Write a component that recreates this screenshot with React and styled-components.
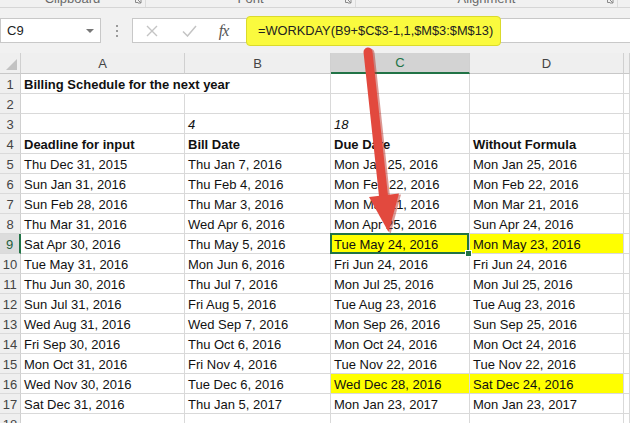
import React from 'react'
import styled, { createGlobalStyle } from 'styled-components';

const GlobalStyle = createGlobalStyle`
    html, body {
        margin: 0;
        padding: 0;
        background: #ffffff;
    }
    body {
        font-family: "Liberation Sans", Arial, sans-serif;
    }
`;

const GREEN = '#217346';
const GRID = '#d9d9d9';

const StyledPage = styled.div`
    position: relative;
    width: 630px;
    height: 423px;
    overflow: hidden;
    background: #f1f1f1;
`;

const StyledRibbon = styled.div`
    display: flex;
    height: 8px;
    border-bottom: 1px solid #d6d6d6;
    box-sizing: border-box;
    overflow: hidden;
`;

const StyledGroup = styled.div`
    position: relative;
    width: ${p => p.$width}px;
    display: flex;
    justify-content: center;
    align-items: flex-end;
    border-right: 1px solid #dcdcdc;
    box-sizing: border-box;
`;

const StyledGroupLabel = styled.span`
    font-size: 13px;
    line-height: 17px;
    color: #6a6a6a;
`;

const StyledLauncher = styled.svg`
    position: absolute;
    right: 3px;
    top: 0;
`;

const StyledFormulaRow = styled.div`
    display: flex;
    align-items: center;
    height: 45px;
`;

const StyledNameBox = styled.div`
    display: flex;
    align-items: center;
    justify-content: space-between;
    width: 101px;
    height: 25px;
    box-sizing: border-box;
    padding: 0 6px 0 6px;
    background: #ffffff;
    border: 1px solid #c8c8c8;
    font-size: 13px;
    color: #222;
`;

const StyledCaret = styled.span`
    width: 0;
    height: 0;
    border-left: 4px solid transparent;
    border-right: 4px solid transparent;
    border-top: 4px solid #777;
`;

const StyledDots = styled.div`
    width: 31px;
    display: flex;
    flex-direction: column;
    align-items: center;
    gap: 3px;

    span {
        width: 2px;
        height: 2px;
        background: #9a9a9a;
    }
`;

const StyledFormulaBox = styled.div`
    flex: 1;
    display: flex;
    align-items: center;
    height: 25px;
    box-sizing: border-box;
    background: #ffffff;
    border: 1px solid #c8c8c8;
    border-right: none;
`;

const StyledIconButton = styled.div`
    width: ${p => p.$width}px;
    display: flex;
    justify-content: center;
    align-items: center;
`;

const StyledFx = styled.span`
    font-family: "Liberation Serif", "Times New Roman", serif;
    font-style: italic;
    font-size: 16px;
    color: #555;
    letter-spacing: -1px;
`;

const StyledHighlight = styled.div`
    margin-left: 7px;
    height: 30px;
    width: 255px;
    box-sizing: border-box;
    display: flex;
    align-items: center;
    padding-left: 11px;
    background: #fafa3e;
    border: 1px solid #dada2c;
    border-radius: 4px;
    font-size: 12.8px;
    color: #222;
    white-space: nowrap;
`;

const StyledSheet = styled.div`
    display: grid;
    grid-template-columns: 21px 164px 146px 139px 154px 1fr;
    grid-auto-rows: 20px;
    grid-template-rows: 21px;
    background: #ffffff;
`;

const StyledCorner = styled.div`
    position: relative;
    background: #efefef;
    border-right: 1px solid #d0d0d0;
    border-bottom: 1px solid #c8c8c8;
    box-sizing: border-box;

    &::after {
        content: '';
        position: absolute;
        right: 3px;
        bottom: 3px;
        width: 0;
        height: 0;
        border-left: 11px solid transparent;
        border-bottom: 11px solid #c2c2c2;
    }
`;

const StyledColHead = styled.div`
    display: flex;
    align-items: center;
    justify-content: center;
    box-sizing: border-box;
    font-size: 13px;
    background: ${p => p.$active ? '#d3d3d3' : '#efefef'};
    color: ${p => p.$active ? GREEN : '#444'};
    border-right: 1px solid #d0d0d0;
    border-bottom: ${p => p.$active ? `2px solid ${GREEN}` : '1px solid #c8c8c8'};
`;

const StyledRowHead = styled.div`
    display: flex;
    align-items: center;
    justify-content: center;
    box-sizing: border-box;
    font-size: 13px;
    padding-top: 1px;
    background: ${p => p.$active ? '#dcdcdc' : '#efefef'};
    color: ${p => p.$active ? '#1e5c3a' : '#444'};
    border-right: ${p => p.$active ? `2px solid ${GREEN}` : '1px solid #d0d0d0'};
    border-bottom: 1px solid #dadada;
`;

const StyledCell = styled.div`
    position: relative;
    box-sizing: border-box;
    padding: 1px 0 0 3px;
    line-height: 19px;
    font-size: 13px;
    color: #111;
    white-space: nowrap;
    overflow: ${p => p.$spill ? 'visible' : 'hidden'};
    z-index: ${p => p.$spill || p.$selected ? 1 : 0};
    font-weight: ${p => p.$bold ? 700 : 400};
    font-style: ${p => p.$italic ? 'italic' : 'normal'};
    background: ${p => p.$fill ? '#ffff00' : '#ffffff'};
    border-right: 1px solid ${p => p.$spill ? '#ffffff' : GRID};
    border-bottom: 1px solid ${GRID};

    ${p => p.$selected && `
        overflow: visible;
        &::before {
            content: '';
            position: absolute;
            left: -1px;
            top: -1px;
            right: 0;
            bottom: -1px;
            border: 2px solid ${GREEN};
            pointer-events: none;
        }
        &::after {
            content: '';
            position: absolute;
            right: -3px;
            bottom: -4px;
            width: 5px;
            height: 5px;
            background: ${GREEN};
            border: 1px solid #ffffff;
        }
    `}
`;

const StyledArrow = styled.svg`
    position: absolute;
    left: 0;
    top: 0;
    z-index: 5;
    pointer-events: none;
`;

const rows = [
    [{ text: 'Billing Schedule for the next year', bold: true, spill: true }, {}, {}, {}],
    [{}, {}, {}, {}],
    [{}, { text: '4', italic: true }, { text: '18', italic: true }, {}],
    [
        { text: 'Deadline for input', bold: true },
        { text: 'Bill Date', bold: true },
        { text: 'Due Date', bold: true },
        { text: 'Without Formula', bold: true },
    ],
    ['Thu Dec 31, 2015', 'Thu Jan 7, 2016', 'Mon Jan 25, 2016', 'Mon Jan 25, 2016'],
    ['Sun Jan 31, 2016', 'Thu Feb 4, 2016', 'Mon Feb 22, 2016', 'Mon Feb 22, 2016'],
    ['Sun Feb 28, 2016', 'Thu Mar 3, 2016', 'Mon Mar 21, 2016', 'Mon Mar 21, 2016'],
    ['Thu Mar 31, 2016', 'Wed Apr 6, 2016', 'Mon Apr 25, 2016', 'Sun Apr 24, 2016'],
    ['Sat Apr 30, 2016', 'Thu May 5, 2016', 'Tue May 24, 2016', 'Mon May 23, 2016'],
    ['Tue May 31, 2016', 'Mon Jun 6, 2016', 'Fri Jun 24, 2016', 'Fri Jun 24, 2016'],
    ['Thu Jun 30, 2016', 'Thu Jul 7, 2016', 'Mon Jul 25, 2016', 'Mon Jul 25, 2016'],
    ['Sun Jul 31, 2016', 'Fri Aug 5, 2016', 'Tue Aug 23, 2016', 'Tue Aug 23, 2016'],
    ['Wed Aug 31, 2016', 'Wed Sep 7, 2016', 'Mon Sep 26, 2016', 'Sun Sep 25, 2016'],
    ['Fri Sep 30, 2016', 'Thu Oct 6, 2016', 'Mon Oct 24, 2016', 'Mon Oct 24, 2016'],
    ['Mon Oct 31, 2016', 'Fri Nov 4, 2016', 'Tue Nov 22, 2016', 'Tue Nov 22, 2016'],
    ['Wed Nov 30, 2016', 'Tue Dec 6, 2016', 'Wed Dec 28, 2016', 'Sat Dec 24, 2016'],
    ['Sat Dec 31, 2016', 'Thu Jan 5, 2017', 'Mon Jan 23, 2017', 'Mon Jan 23, 2017'],
    [{}, {}, {}, {}],
];

// rows (1-based) where the due date and the manual date were marked yellow
const marked = [9, 16];
const selectedRow = 9;

function Launcher() {
    return (
        <StyledLauncher width="7" height="6" viewBox="0 0 7 6">
            <path d="M0.5 0 V2.5 H3" stroke="#8a8a8a" fill="none" />
            <path d="M3 0 L6 3 M6 0 V3 H3" stroke="#8a8a8a" fill="none" />
        </StyledLauncher>
    );
}

function App() {
    return (
        <StyledPage>
            <GlobalStyle />
            <StyledRibbon>
                <StyledGroup $width={146}><StyledGroupLabel>Clipboard</StyledGroupLabel><Launcher /></StyledGroup>
                <StyledGroup $width={210}><StyledGroupLabel>Font</StyledGroupLabel><Launcher /></StyledGroup>
                <StyledGroup $width={262}><StyledGroupLabel>Alignment</StyledGroupLabel><Launcher /></StyledGroup>
            </StyledRibbon>

            <StyledFormulaRow>
                <StyledNameBox>
                    <span>C9</span>
                    <StyledCaret />
                </StyledNameBox>
                <StyledDots><span /><span /><span /></StyledDots>
                <StyledFormulaBox>
                    <StyledIconButton $width={38}>
                        <svg width="12" height="12" viewBox="0 0 12 12">
                            <path d="M1 1 L11 11 M11 1 L1 11" stroke="#c4c4c4" strokeWidth="1.4" />
                        </svg>
                    </StyledIconButton>
                    <StyledIconButton $width={37}>
                        <svg width="15" height="12" viewBox="0 0 15 12">
                            <path d="M1 6.5 L5.5 11 L14 1" stroke="#c4c4c4" strokeWidth="1.5" fill="none" />
                        </svg>
                    </StyledIconButton>
                    <StyledIconButton $width={31}>
                        <StyledFx>fx</StyledFx>
                    </StyledIconButton>
                    <StyledHighlight>=WORKDAY(B9+$C$3-1,1,$M$3:$M$13)</StyledHighlight>
                </StyledFormulaBox>
            </StyledFormulaRow>

            <StyledSheet>
                <StyledCorner />
                {['A', 'B', 'C', 'D', ''].map((col, i) => (
                    <StyledColHead key={i} $active={col === 'C'}>{col}</StyledColHead>
                ))}

                {rows.map((row, r) => {
                    const n = r + 1;
                    const cells = row.map(c => typeof c === 'string' ? { text: c } : c);
                    return (
                        <React.Fragment key={n}>
                            <StyledRowHead $active={n === selectedRow}>{n}</StyledRowHead>
                            {cells.map((c, i) => (
                                <StyledCell
                                    key={i}
                                    $bold={c.bold}
                                    $italic={c.italic}
                                    $spill={c.spill}
                                    $fill={marked.includes(n) && i >= 2}
                                    $selected={n === selectedRow && i === 2}
                                >
                                    {c.text}
                                </StyledCell>
                            ))}
                            <StyledCell />
                        </React.Fragment>
                    );
                })}
            </StyledSheet>

            <StyledArrow width="630" height="423" viewBox="0 0 630 423">
                <line x1="369" y1="52" x2="384.5" y2="196" stroke="#b8362d" strokeWidth="9" strokeLinecap="round" transform="translate(1 1)" opacity="0.5" />
                <polygon points="370,197 400,193.5 389.5,233" fill="#b8362d" transform="translate(1 1)" opacity="0.5" />
                <line x1="368" y1="52" x2="383.5" y2="196" stroke="#e2493e" strokeWidth="9" strokeLinecap="round" />
                <polygon points="369,197 399,193.5 388.5,232" fill="#e2493e" />
            </StyledArrow>
        </StyledPage>
    );
}

export default App;
